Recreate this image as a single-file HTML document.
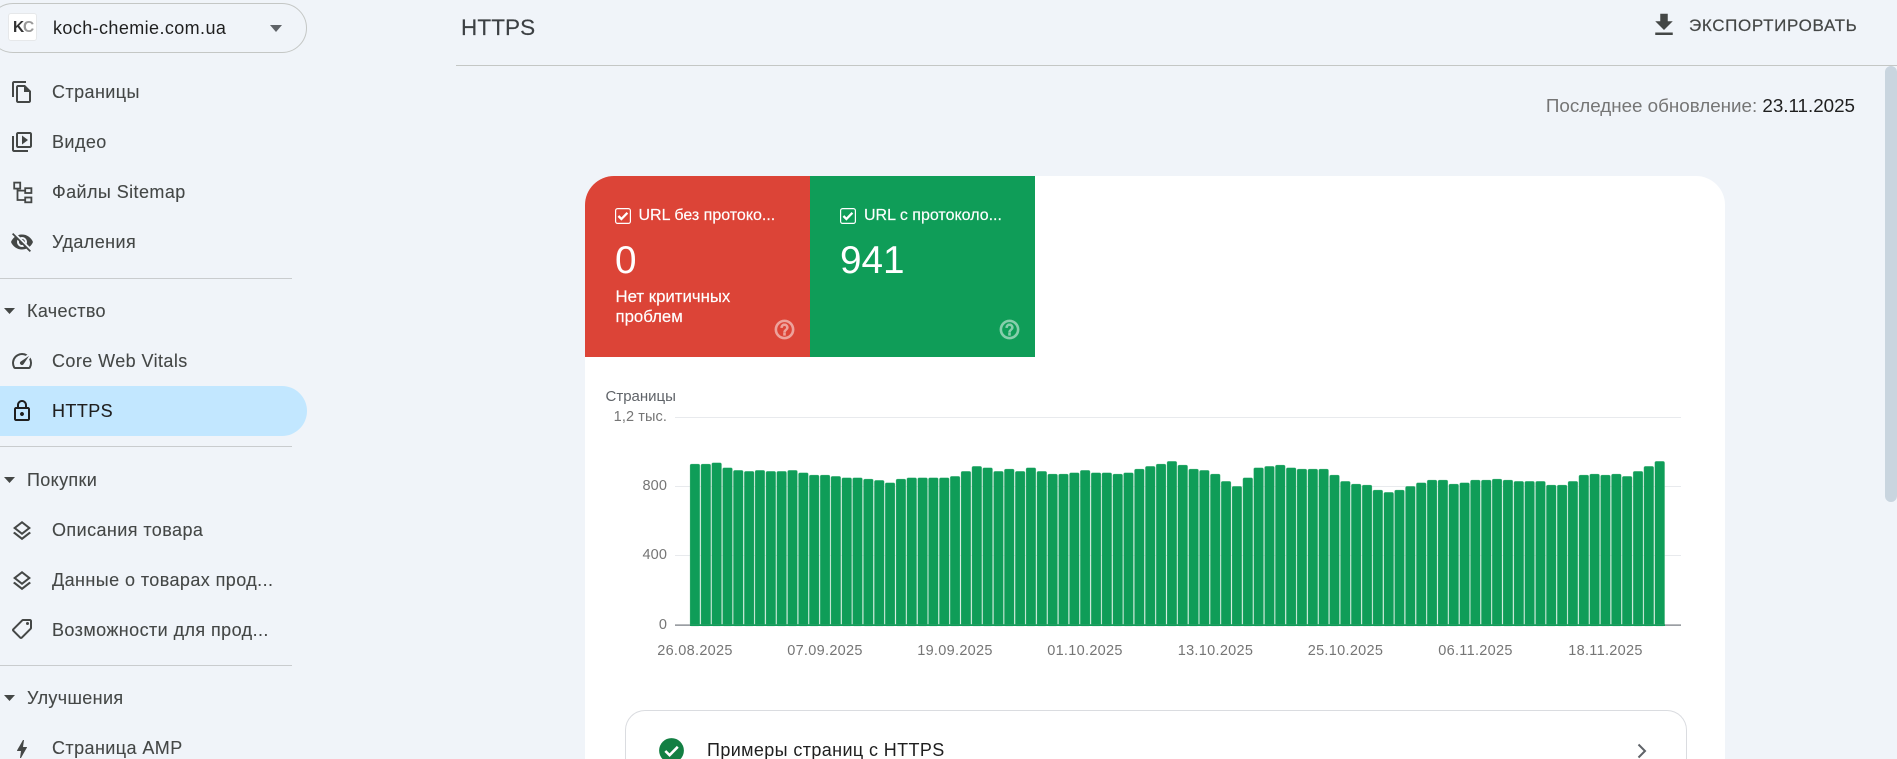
<!DOCTYPE html>
<html lang="ru">
<head>
<meta charset="utf-8">
<title>HTTPS</title>
<style>
html,body{margin:0;padding:0;width:1897px;height:759px;overflow:hidden;background:#f0f4f9;}
body{position:relative;font-family:"Liberation Sans",sans-serif;color:#1f1f1f;}
.t{position:absolute;white-space:nowrap;line-height:20px;height:20px;}
.nav{left:52px;font-size:18px;color:#444746;letter-spacing:.42px;-webkit-text-stroke:.1px #444746;}
.sec{left:27px;font-size:18px;color:#444746;letter-spacing:.35px;-webkit-text-stroke:.1px #444746;}
.hr{position:absolute;left:0;width:292px;height:1px;background:#c9ccce;}
svg.i{position:absolute;left:10px;width:24px;height:24px;fill:#444746;}
svg.c{position:absolute;left:4px;width:11px;height:6px;fill:#444746;}
.box{position:absolute;background:#fff;}
.tile{position:absolute;top:176px;height:181px;width:225px;color:#fff;}
.lbl{font-size:16px;-webkit-text-stroke:.15px #fff;}
.lbl2{font-size:16.8px;-webkit-text-stroke:.15px #fff;}
.ax{font-size:14.5px;color:#757575;text-align:right;right:1230px;letter-spacing:.1px;}
.dt{font-size:14.5px;color:#757575;width:90px;text-align:center;letter-spacing:.3px;top:641px;}
</style>
</head>
<body>

<!-- site pill -->
<div style="position:absolute;left:-12px;top:3px;width:317px;height:48px;border:1px solid #c4c7c5;border-radius:25px;"></div>
<div style="position:absolute;left:8px;top:13px;width:29px;height:28px;background:#fff;border:1px solid #e6e8ea;border-radius:3px;box-sizing:border-box;"></div>
<div class="t" style="left:13px;top:18px;font-size:15.5px;font-weight:bold;letter-spacing:-1.2px;color:#333;">K<span style="color:#999;">C</span></div>
<div class="t" style="left:53px;top:18px;font-size:18px;color:#1f1f1f;letter-spacing:.4px;">koch-chemie.com.ua</div>
<svg style="position:absolute;left:270px;top:25px;" width="12" height="7" viewBox="0 0 12 7"><path d="M0 0h12L6 7z" fill="#5f6368"/></svg>

<!-- nav -->
<svg class="i" style="top:80px;" viewBox="0 0 24 24"><path d="M16 1H4c-1.1 0-2 .9-2 2v14h2V3h12V1zm-1 4H8c-1.1 0-1.99.9-1.99 2L6 21c0 1.1.89 2 1.99 2H19c1.1 0 2-.9 2-2V11l-6-6zM8 21V7h6v5h5v9H8z"/></svg>
<div class="t nav" style="top:82px;">Страницы</div>

<svg class="i" style="top:130px;" viewBox="0 0 24 24"><path d="M4 6H2v14c0 1.1.9 2 2 2h14v-2H4V6zm16-4H8c-1.1 0-2 .9-2 2v12c0 1.1.9 2 2 2h12c1.1 0 2-.9 2-2V4c0-1.1-.9-2-2-2zm0 14H8V4h12v12zM12 5.5v9l6-4.5z"/></svg>
<div class="t nav" style="top:132px;">Видео</div>

<svg class="i" style="top:180px;" viewBox="0 0 24 24"><g fill="none" stroke="#444746" stroke-width="1.8"><rect x="4.2" y="2.6" width="6" height="6"/><rect x="15.2" y="8.2" width="6.2" height="4.8"/><rect x="15.2" y="17.5" width="6.2" height="4.8"/><path d="M7.5 8.6V20H15M7.5 10.6H15"/></g></svg>
<div class="t nav" style="top:182px;">Файлы Sitemap</div>

<svg class="i" style="top:230px;" viewBox="0 0 24 24"><path d="M12 7c2.76 0 5 2.24 5 5 0 .65-.13 1.26-.36 1.83l2.92 2.92c1.51-1.26 2.7-2.89 3.43-4.75-1.73-4.39-6-7.5-11-7.5-1.4 0-2.74.25-3.98.7l2.16 2.16C10.74 7.13 11.35 7 12 7zM2 4.27l2.28 2.28.46.46C3.08 8.3 1.78 10.02 1 12c1.73 4.39 6 7.5 11 7.5 1.55 0 3.03-.3 4.38-.84l.42.42L19.73 22 21 20.73 3.27 3 2 4.27zM7.53 9.8l1.55 1.55c-.05.21-.08.43-.08.65 0 1.66 1.34 3 3 3 .22 0 .44-.03.65-.08l1.55 1.55c-.67.33-1.41.53-2.2.53-2.76 0-5-2.24-5-5 0-.79.2-1.53.53-2.2zm4.31-.78l3.15 3.15.02-.16c0-1.66-1.34-3-3-3l-.17.01z"/></svg>
<div class="t nav" style="top:232px;">Удаления</div>

<div class="hr" style="top:278px;"></div>

<svg class="c" style="top:308px;" viewBox="0 0 11 6"><path d="M0 0h11L5.5 6z"/></svg>
<div class="t sec" style="top:301px;">Качество</div>

<svg class="i" style="top:349px;" viewBox="0 0 24 24"><path d="M20.38 8.57l-1.23 1.85a8 8 0 0 1-.22 7.58H5.07A8 8 0 0 1 15.58 6.85l1.85-1.23A10 10 0 0 0 3.35 19a2 2 0 0 0 1.72 1h13.85a2 2 0 0 0 1.74-1 10 10 0 0 0-.27-10.44zm-9.79 6.84a2 2 0 0 0 2.83 0l5.66-8.49-8.49 5.66a2 2 0 0 0 0 2.83z"/></svg>
<div class="t nav" style="top:351px;">Core Web Vitals</div>

<div style="position:absolute;left:-30px;top:386px;width:337px;height:50px;background:#c2e7ff;border-radius:25px;"></div>
<svg class="i" style="top:399px;fill:#1f1f1f;" viewBox="0 0 24 24"><path d="M18 8h-1V6c0-2.76-2.24-5-5-5S7 3.24 7 6v2H6c-1.1 0-2 .9-2 2v10c0 1.1.9 2 2 2h12c1.1 0 2-.9 2-2V10c0-1.1-.9-2-2-2zM9 6c0-1.66 1.34-3 3-3s3 1.34 3 3v2H9V6zm9 14H6V10h12v10zm-6-3c1.1 0 2-.9 2-2s-.9-2-2-2-2 .9-2 2 .9 2 2 2z"/></svg>
<div class="t nav" style="top:401px;color:#1f1f1f;-webkit-text-stroke:.1px #1f1f1f;">HTTPS</div>

<div class="hr" style="top:446px;"></div>

<svg class="c" style="top:477px;" viewBox="0 0 11 6"><path d="M0 0h11L5.5 6z"/></svg>
<div class="t sec" style="top:470px;">Покупки</div>

<svg class="i" style="top:519px;" viewBox="0 0 24 24"><path d="M11.99 18.54l-7.37-5.73L3 14.07l9 7 9-7-1.63-1.27zM12 16l7.36-5.73L21 9l-9-7-9 7 1.63 1.27L12 16zm0-11.47L17.74 9 12 13.47 6.26 9 12 4.53z"/></svg>
<div class="t nav" style="top:520px;">Описания товара</div>

<svg class="i" style="top:569px;" viewBox="0 0 24 24"><path d="M11.99 18.54l-7.37-5.73L3 14.07l9 7 9-7-1.63-1.27zM12 16l7.36-5.73L21 9l-9-7-9 7 1.63 1.27L12 16zm0-11.47L17.74 9 12 13.47 6.26 9 12 4.53z"/></svg>
<div class="t nav" style="top:570px;">Данные о товарах прод...</div>

<svg class="i" style="top:617px;transform:scaleX(-1);" viewBox="0 0 24 24"><path d="M21.41 11.58l-9-9C12.05 2.22 11.55 2 11 2H4c-1.1 0-2 .9-2 2v7c0 .55.22 1.05.59 1.42l9 9c.36.36.86.58 1.41.58s1.05-.22 1.41-.59l7-7c.37-.36.59-.86.59-1.41s-.23-1.06-.59-1.42zM13 20.01L4 11V4h7v-.01l9 9-7 7.02z"/><circle cx="6.5" cy="6.5" r="1.5"/></svg>
<div class="t nav" style="top:620px;">Возможности для прод...</div>

<div class="hr" style="top:665px;"></div>

<svg class="c" style="top:695px;" viewBox="0 0 11 6"><path d="M0 0h11L5.5 6z"/></svg>
<div class="t sec" style="top:688px;">Улучшения</div>

<svg class="i" style="top:737px;" viewBox="0 0 24 24"><path d="M11 21h-1l1-7H7.5c-.58 0-.57-.32-.38-.66.19-.34.05-.08.07-.12C8.48 10.94 10.42 7.54 13 3h1l-1 7h3.5c.49 0 .56.33.47.51l-.07.15C12.96 17.55 11 21 11 21z"/></svg>
<div class="t nav" style="top:738px;">Страница AMP</div>

<!-- header -->
<div class="t" style="left:461px;top:18px;font-size:22.5px;color:#3c4043;letter-spacing:.1px;-webkit-text-stroke:.15px #3c4043;">HTTPS</div>
<svg style="position:absolute;left:1649px;top:10px;width:30px;height:30px;fill:#444746;" viewBox="0 0 24 24"><path d="M19 9h-4V3H9v6H5l7 7 7-7zM5 18v2h14v-2H5z"/></svg>
<div class="t" style="left:1689px;top:16px;font-size:17px;color:#444746;letter-spacing:.65px;-webkit-text-stroke:.2px #444746;">ЭКСПОРТИРОВАТЬ</div>
<div style="position:absolute;left:456px;right:0;top:65px;height:1px;background:#c4c7c5;"></div>
<div style="position:absolute;left:1885px;top:66px;width:12px;height:436px;background:#c9d5df;border-radius:6px;"></div>

<div class="t" style="right:42px;top:96px;font-size:18.8px;color:#757575;">Последнее обновление: <span style="color:#1f1f1f;">23.11.2025</span></div>

<!-- card -->
<div class="box" style="left:585px;top:176px;width:1140px;height:583px;border-radius:29px 29px 0 0;"></div>

<!-- tiles -->
<div class="tile" style="left:585px;background:#dc4437;border-radius:29px 0 0 0;"></div>
<div class="tile" style="left:810px;background:#0f9d58;"></div>

<svg style="position:absolute;left:615px;top:208px;" width="16" height="16" viewBox="0 0 16 16"><rect x=".6" y=".6" width="14.8" height="14.8" rx="2" fill="none" stroke="#fff" stroke-width="1.2"/><path d="M3.4 8l3 3 6-6.2" fill="none" stroke="#fff" stroke-width="2.3"/></svg>
<div class="t lbl" style="left:638.5px;top:206px;color:#fff;">URL без протоко...</div>
<div class="t" style="left:615px;top:242px;font-size:38.7px;line-height:38px;height:38px;color:#fff;">0</div>
<div class="t lbl2" style="left:615.5px;top:287px;color:#fff;">Нет критичных</div>
<div class="t lbl2" style="left:615.5px;top:307px;color:#fff;">проблем</div>
<svg style="position:absolute;left:773px;top:318px;opacity:.5;fill:#fff;stroke:#fff;stroke-width:.7;" width="23" height="23" viewBox="0 0 24 24"><path d="M11 18h2v-2h-2v2zm1-16C6.48 2 2 6.48 2 12s4.48 10 10 10 10-4.48 10-10S17.52 2 12 2zm0 18c-4.41 0-8-3.59-8-8s3.59-8 8-8 8 3.59 8 8-3.59 8-8 8zm0-14c-2.21 0-4 1.79-4 4h2c0-1.1.9-2 2-2s2 .9 2 2c0 2-3 1.75-3 5h2c0-2.25 3-2.5 3-5 0-2.21-1.79-4-4-4z"/></svg>

<svg style="position:absolute;left:840px;top:208px;" width="16" height="16" viewBox="0 0 16 16"><rect x=".6" y=".6" width="14.8" height="14.8" rx="2" fill="none" stroke="#fff" stroke-width="1.2"/><path d="M3.4 8l3 3 6-6.2" fill="none" stroke="#fff" stroke-width="2.3"/></svg>
<div class="t lbl" style="left:864px;top:206px;color:#fff;">URL с протоколо...</div>
<div class="t" style="left:840px;top:242px;font-size:38.7px;line-height:38px;height:38px;color:#fff;">941</div>
<svg style="position:absolute;left:998px;top:318px;opacity:.5;fill:#fff;stroke:#fff;stroke-width:.7;" width="23" height="23" viewBox="0 0 24 24"><path d="M11 18h2v-2h-2v2zm1-16C6.48 2 2 6.48 2 12s4.48 10 10 10 10-4.48 10-10S17.52 2 12 2zm0 18c-4.41 0-8-3.59-8-8s3.59-8 8-8 8 3.59 8 8-3.59 8-8 8zm0-14c-2.21 0-4 1.79-4 4h2c0-1.1.9-2 2-2s2 .9 2 2c0 2-3 1.75-3 5h2c0-2.25 3-2.5 3-5 0-2.21-1.79-4-4-4z"/></svg>

<!-- chart labels -->
<div class="t" style="left:605.5px;top:387px;font-size:15px;color:#5f6368;">Страницы</div>
<div class="t ax" style="top:407px;">1,2 тыс.</div>
<div class="t ax" style="top:476px;">800</div>
<div class="t ax" style="top:545px;">400</div>
<div class="t ax" style="top:615px;">0</div>

<svg style="position:absolute;left:0;top:0;" width="1897" height="759" viewBox="0 0 1897 759">
<path d="M675 417.5H1681M675 486.5H1681M675 555.5H1681" stroke="#e8eaed" stroke-width="1" fill="none"/>
<g fill="#0f9d58" stroke="#7fc9a3" stroke-width=".3" transform="translate(690 0) scale(.9985 1) translate(-690 0)">
<rect x="690.0" y="464" width="9.9" height="162" rx="1.5"/>
<rect x="700.9" y="464" width="9.9" height="162" rx="1.5"/>
<rect x="711.7" y="462.7" width="9.9" height="163.3" rx="1.5"/>
<rect x="722.6" y="467.7" width="9.9" height="158.3" rx="1.5"/>
<rect x="733.4" y="470.3" width="9.9" height="155.7" rx="1.5"/>
<rect x="744.3" y="471.3" width="9.9" height="154.7" rx="1.5"/>
<rect x="755.1" y="470.3" width="9.9" height="155.7" rx="1.5"/>
<rect x="766.0" y="471.3" width="9.9" height="154.7" rx="1.5"/>
<rect x="776.8" y="471.3" width="9.9" height="154.7" rx="1.5"/>
<rect x="787.7" y="470.3" width="9.9" height="155.7" rx="1.5"/>
<rect x="798.6" y="472.7" width="9.9" height="153.3" rx="1.5"/>
<rect x="809.4" y="475" width="9.9" height="151" rx="1.5"/>
<rect x="820.3" y="475" width="9.9" height="151" rx="1.5"/>
<rect x="831.1" y="476.3" width="9.9" height="149.7" rx="1.5"/>
<rect x="842.0" y="477.7" width="9.9" height="148.3" rx="1.5"/>
<rect x="852.8" y="477.7" width="9.9" height="148.3" rx="1.5"/>
<rect x="863.7" y="479" width="9.9" height="147" rx="1.5"/>
<rect x="874.6" y="480.3" width="9.9" height="145.7" rx="1.5"/>
<rect x="885.4" y="482.7" width="9.9" height="143.3" rx="1.5"/>
<rect x="896.3" y="479" width="9.9" height="147" rx="1.5"/>
<rect x="907.1" y="477.7" width="9.9" height="148.3" rx="1.5"/>
<rect x="918.0" y="477.7" width="9.9" height="148.3" rx="1.5"/>
<rect x="928.8" y="477.7" width="9.9" height="148.3" rx="1.5"/>
<rect x="939.7" y="477.7" width="9.9" height="148.3" rx="1.5"/>
<rect x="950.5" y="476.3" width="9.9" height="149.7" rx="1.5"/>
<rect x="961.4" y="471.3" width="9.9" height="154.7" rx="1.5"/>
<rect x="972.3" y="466.3" width="9.9" height="159.7" rx="1.5"/>
<rect x="983.1" y="467.7" width="9.9" height="158.3" rx="1.5"/>
<rect x="994.0" y="471.3" width="9.9" height="154.7" rx="1.5"/>
<rect x="1004.8" y="469" width="9.9" height="157" rx="1.5"/>
<rect x="1015.7" y="471.3" width="9.9" height="154.7" rx="1.5"/>
<rect x="1026.5" y="467.7" width="9.9" height="158.3" rx="1.5"/>
<rect x="1037.4" y="471.3" width="9.9" height="154.7" rx="1.5"/>
<rect x="1048.2" y="474" width="9.9" height="152" rx="1.5"/>
<rect x="1059.1" y="474" width="9.9" height="152" rx="1.5"/>
<rect x="1070.0" y="472.7" width="9.9" height="153.3" rx="1.5"/>
<rect x="1080.8" y="470.3" width="9.9" height="155.7" rx="1.5"/>
<rect x="1091.7" y="472.7" width="9.9" height="153.3" rx="1.5"/>
<rect x="1102.5" y="472.7" width="9.9" height="153.3" rx="1.5"/>
<rect x="1113.4" y="474" width="9.9" height="152" rx="1.5"/>
<rect x="1124.2" y="472.7" width="9.9" height="153.3" rx="1.5"/>
<rect x="1135.1" y="469" width="9.9" height="157" rx="1.5"/>
<rect x="1146.0" y="466.3" width="9.9" height="159.7" rx="1.5"/>
<rect x="1156.8" y="464" width="9.9" height="162" rx="1.5"/>
<rect x="1167.7" y="461.3" width="9.9" height="164.7" rx="1.5"/>
<rect x="1178.5" y="465" width="9.9" height="161" rx="1.5"/>
<rect x="1189.4" y="469" width="9.9" height="157" rx="1.5"/>
<rect x="1200.2" y="470.3" width="9.9" height="155.7" rx="1.5"/>
<rect x="1211.1" y="474" width="9.9" height="152" rx="1.5"/>
<rect x="1221.9" y="481.3" width="9.9" height="144.7" rx="1.5"/>
<rect x="1232.8" y="486.3" width="9.9" height="139.7" rx="1.5"/>
<rect x="1243.7" y="477.7" width="9.9" height="148.3" rx="1.5"/>
<rect x="1254.5" y="467.7" width="9.9" height="158.3" rx="1.5"/>
<rect x="1265.4" y="466.3" width="9.9" height="159.7" rx="1.5"/>
<rect x="1276.2" y="465" width="9.9" height="161" rx="1.5"/>
<rect x="1287.1" y="467.7" width="9.9" height="158.3" rx="1.5"/>
<rect x="1297.9" y="469" width="9.9" height="157" rx="1.5"/>
<rect x="1308.8" y="469" width="9.9" height="157" rx="1.5"/>
<rect x="1319.6" y="469" width="9.9" height="157" rx="1.5"/>
<rect x="1330.5" y="475" width="9.9" height="151" rx="1.5"/>
<rect x="1341.4" y="481.3" width="9.9" height="144.7" rx="1.5"/>
<rect x="1352.2" y="484" width="9.9" height="142" rx="1.5"/>
<rect x="1363.1" y="485" width="9.9" height="141" rx="1.5"/>
<rect x="1373.9" y="490" width="9.9" height="136" rx="1.5"/>
<rect x="1384.8" y="492.3" width="9.9" height="133.7" rx="1.5"/>
<rect x="1395.6" y="490" width="9.9" height="136" rx="1.5"/>
<rect x="1406.5" y="486.3" width="9.9" height="139.7" rx="1.5"/>
<rect x="1417.4" y="482.7" width="9.9" height="143.3" rx="1.5"/>
<rect x="1428.2" y="480" width="9.9" height="146" rx="1.5"/>
<rect x="1439.1" y="480" width="9.9" height="146" rx="1.5"/>
<rect x="1449.9" y="484" width="9.9" height="142" rx="1.5"/>
<rect x="1460.8" y="482.7" width="9.9" height="143.3" rx="1.5"/>
<rect x="1471.6" y="480" width="9.9" height="146" rx="1.5"/>
<rect x="1482.5" y="480" width="9.9" height="146" rx="1.5"/>
<rect x="1493.3" y="479" width="9.9" height="147" rx="1.5"/>
<rect x="1504.2" y="480" width="9.9" height="146" rx="1.5"/>
<rect x="1515.1" y="481.3" width="9.9" height="144.7" rx="1.5"/>
<rect x="1525.9" y="481.3" width="9.9" height="144.7" rx="1.5"/>
<rect x="1536.8" y="481.3" width="9.9" height="144.7" rx="1.5"/>
<rect x="1547.6" y="485" width="9.9" height="141" rx="1.5"/>
<rect x="1558.5" y="485" width="9.9" height="141" rx="1.5"/>
<rect x="1569.3" y="481.3" width="9.9" height="144.7" rx="1.5"/>
<rect x="1580.2" y="475" width="9.9" height="151" rx="1.5"/>
<rect x="1591.0" y="474" width="9.9" height="152" rx="1.5"/>
<rect x="1601.9" y="475" width="9.9" height="151" rx="1.5"/>
<rect x="1612.8" y="474" width="9.9" height="152" rx="1.5"/>
<rect x="1623.6" y="476.3" width="9.9" height="149.7" rx="1.5"/>
<rect x="1634.5" y="471.3" width="9.9" height="154.7" rx="1.5"/>
<rect x="1645.3" y="466.3" width="9.9" height="159.7" rx="1.5"/>
<rect x="1656.2" y="461.3" width="9.9" height="164.7" rx="1.5"/>
</g>
<rect x="675" y="624.3" width="1006" height="1.7" fill="#9a9ea3"/>
<rect x="690" y="624.3" width="975" height="1.7" fill="#0f9d58"/>
</svg>

<div class="t dt" style="left:650px;">26.08.2025</div>
<div class="t dt" style="left:780px;">07.09.2025</div>
<div class="t dt" style="left:910px;">19.09.2025</div>
<div class="t dt" style="left:1040px;">01.10.2025</div>
<div class="t dt" style="left:1170.5px;">13.10.2025</div>
<div class="t dt" style="left:1300.5px;">25.10.2025</div>
<div class="t dt" style="left:1430.5px;">06.11.2025</div>
<div class="t dt" style="left:1560.5px;">18.11.2025</div>

<!-- examples row -->
<div style="position:absolute;left:625px;top:710px;width:1060px;height:49px;border:1px solid #dadce0;border-bottom:0;border-radius:20px 20px 0 0;box-sizing:content-box;"></div>
<svg style="position:absolute;left:659px;top:738px;" width="25" height="25" viewBox="0 0 25 25"><circle cx="12.5" cy="12.5" r="12.4" fill="#137f43"/><path d="M6.3 13l4.3 4.2 8.2-8.4" fill="none" stroke="#fff" stroke-width="2.6"/></svg>
<div class="t" style="left:707px;top:740px;font-size:18px;color:#1f1f1f;letter-spacing:.38px;">Примеры страниц с HTTPS</div>
<svg style="position:absolute;left:1633.5px;top:742px;" width="16" height="18" viewBox="0 0 16 18"><path d="M4.5 2.5l6.5 6.5-6.5 6.5" fill="none" stroke="#5f6368" stroke-width="2"/></svg>

</body>
</html>
